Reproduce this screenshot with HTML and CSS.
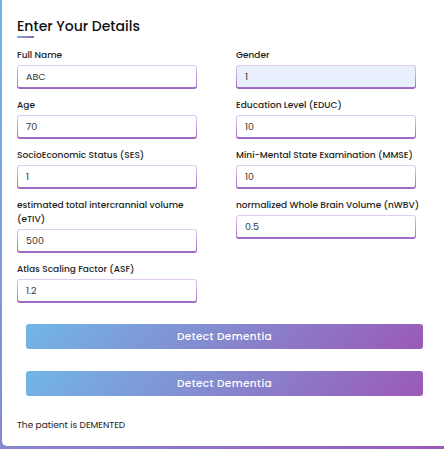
FILE: index.html
```html
<!DOCTYPE html>
<html>
<head>
<meta charset="utf-8">
<link rel="stylesheet" href="styles.css">
</head>
<body>
<div class="container">
  <div class="title">Enter Your Details</div>
  <form class="details">
    <div class="field">
      <label>Full Name</label>
      <input type="text" value="ABC">
    </div>
    <div class="field">
      <label>Gender</label>
      <input class="autofill" type="text" value="1">
    </div>
    <div class="field">
      <label>Age</label>
      <input type="text" value="70">
    </div>
    <div class="field">
      <label>Education Level (EDUC)</label>
      <input type="text" value="10">
    </div>
    <div class="field">
      <label>SocioEconomic Status (SES)</label>
      <input type="text" value="1">
    </div>
    <div class="field">
      <label>Mini-Mental State Examination (MMSE)</label>
      <input type="text" value="10">
    </div>
    <div class="field">
      <label>estimated total intercrannial volume (eTIV)</label>
      <input type="text" value="500">
    </div>
    <div class="field">
      <label>normalized Whole Brain Volume (nWBV)</label>
      <input type="text" value="0.5">
    </div>
    <div class="field">
      <label>Atlas Scaling Factor (ASF)</label>
      <input type="text" value="1.2">
    </div>
  </form>
  <button class="btn first" type="button">Detect Dementia</button>
  <button class="btn second" type="button">Detect Dementia</button>
  <p class="result">The patient is DEMENTED</p>
</div>
</body>
</html>
```
FILE: styles.css
```css
html, body {
  margin: 0;
  padding: 0;
  height: 449px;
  overflow: hidden;
}
body {
  background: linear-gradient(135deg, #71b7e6, #9b59b6);
  font-family: "Poppins", "Inter", "Noto Sans", sans-serif;
  color: #222;
}
.container {
  box-sizing: border-box;
  margin-left: 2px;
  width: 442px;
  height: 446px;
  background: #fff;
  border-radius: 0 0 0 5px;
  padding: 16px 0 0 15px;
}
.title {
  font-size: 14px;
  font-weight: 500;
  line-height: 20px;
  color: #111;
}
.title::after {
  content: "";
  display: block;
  width: 17px;
  height: 2px;
  background: linear-gradient(135deg, #71b7e6, #9b59b6);
}
.details {
  margin-top: 10px;
  display: grid;
  grid-template-columns: 180px 190px;
  column-gap: 39px;
  row-gap: 9px;
  align-items: start;
}
.field label {
  display: block;
  font-size: 9px;
  font-weight: 500;
  line-height: 14px;
  margin-bottom: 3px;
  color: #1e1e1e;
}
.field input {
  display: block;
  box-sizing: border-box;
  width: 180px;
  height: 24px;
  padding: 0 0 0 8px;
  font-family: inherit;
  font-size: 9.5px;
  color: #333;
  border: 1px solid transparent;
  border-bottom-width: 2px;
  border-radius: 3px;
  outline: none;
  background: linear-gradient(#fff, #fff) padding-box,
              linear-gradient(to bottom, #e2cff0, #a066c0) border-box;
}
.field input.autofill {
  background: linear-gradient(#e8f0fe, #e8f0fe) padding-box,
              linear-gradient(to bottom, #e2cff0, #a066c0) border-box;
}
.btn {
  display: block;
  box-sizing: border-box;
  width: 397px;
  height: 25px;
  margin-left: 9px;
  border: none;
  border-radius: 3px;
  background: linear-gradient(135deg, #71b7e6, #9b59b6);
  color: #fff;
  font-family: inherit;
  font-size: 10.5px;
  font-weight: 500;
  letter-spacing: 0.4px;
  padding: 0;
}
.btn.first {
  margin-top: 21px;
}
.btn.second {
  margin-top: 22px;
}
.result {
  margin: 22px 0 0 0;
  font-size: 9px;
  line-height: 15px;
  color: #222;
}
```
